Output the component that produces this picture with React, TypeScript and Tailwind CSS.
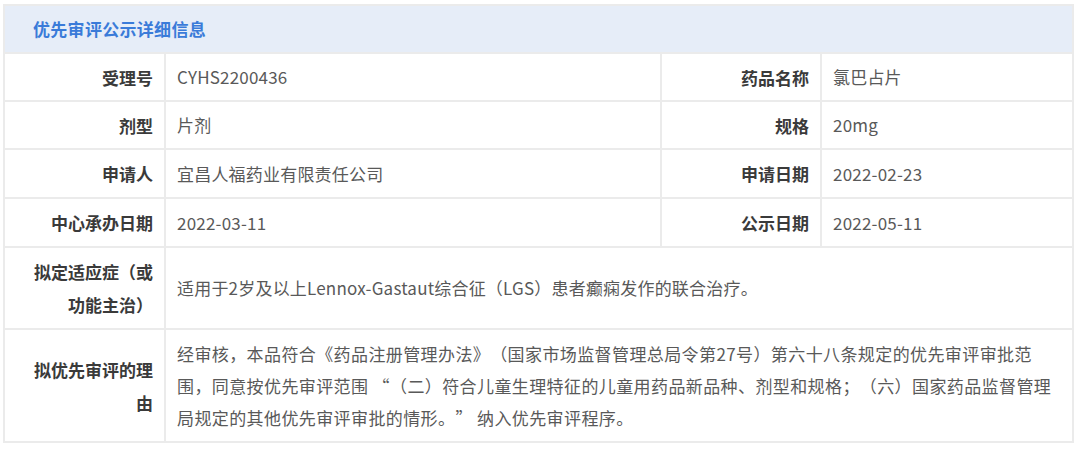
import React from "react";

const font = { fontFamily: '"Noto Sans CJK SC", "Noto Sans", sans-serif' };

function Label({ children, className = "" }: { children: React.ReactNode; className?: string }) {
  return (
    <div
      className={
        "bg-white flex items-center justify-end text-right pl-[20px] pr-[11px] text-[17px] font-bold text-[#3a3a3a] leading-[33px] [text-spacing-trim:space-all] " +
        className
      }
    >
      <span>{children}</span>
    </div>
  );
}

function Value({ children, className = "" }: { children: React.ReactNode; className?: string }) {
  return (
    <div
      className={
        "bg-white flex items-center pl-[11px] text-[17px] text-[#595959] leading-[32px] [text-spacing-trim:space-all] " +
        className
      }
    >
      <span>{children}</span>
    </div>
  );
}

export default function App() {
  return (
    <div className="w-[1080px] h-[451px] bg-white pt-[4px] pl-[3px]" style={font}>
      <div className="w-[1071px] bg-[#ebebeb] p-[2px] grid grid-cols-[159px_494px_158px_1fr] grid-rows-[46px_46px_46px_47px_47px_80px_111px] gap-[2px]">
        <div className="col-span-4 bg-[#e6edf8] flex items-center pl-[28px] text-[17px] font-bold text-[#3a7bd9] tracking-[0.3px]">
          优先审评公示详细信息
        </div>

        <Label>受理号</Label>
        <Value className="pr-[12px] tracking-[0.2px]">CYHS2200436</Value>
        <Label>药品名称</Label>
        <Value className="pr-[12px] tracking-[0.2px]">氯巴占片</Value>

        <Label>剂型</Label>
        <Value className="pr-[12px] tracking-[0.2px]">片剂</Value>
        <Label>规格</Label>
        <Value className="pr-[12px] tracking-[0.2px]">20mg</Value>

        <Label>申请人</Label>
        <Value className="pr-[12px] tracking-[0.2px]">宜昌人福药业有限责任公司</Value>
        <Label>申请日期</Label>
        <Value className="pr-[12px] tracking-[0.2px]">2022-02-23</Value>

        <Label>中心承办日期</Label>
        <Value className="pr-[12px] tracking-[0.2px]">2022-03-11</Value>
        <Label>公示日期</Label>
        <Value className="pr-[12px] tracking-[0.2px]">2022-05-11</Value>

        <Label>拟定适应症（或功能主治）</Label>
        <Value className="col-span-3 pr-[12px] tracking-[0.2px]">适用于2岁及以上Lennox-Gastaut综合征（LGS）患者癫痫发作的联合治疗。</Value>

        <Label>拟优先审评的理由</Label>
        <Value className="col-span-3 pr-[18px] tracking-[0.4px]">
          经审核，本品符合《药品注册管理办法》（国家市场监督管理总局令第27号）第六十八条规定的优先审评审批范围，同意按优先审评范围 “（二）符合儿童生理特征的儿童用药品新品种、剂型和规格；（六）国家药品监督管理局规定的其他优先审评审批的情形。” 纳入优先审评程序。
        </Value>
      </div>
    </div>
  );
}
